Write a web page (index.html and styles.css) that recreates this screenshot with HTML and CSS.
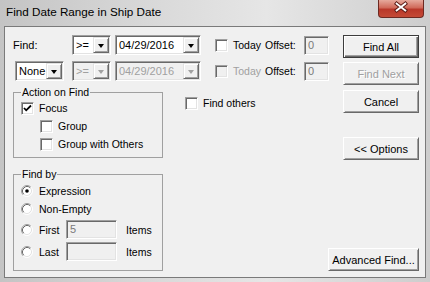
FILE: index.html
```html
<!DOCTYPE html>
<html lang="en">

<head>
    <meta charset="UTF-8">
    <title>Find Date Range in Ship Date</title>
    <link rel="stylesheet" href="styles.css">
</head>

<body>
    <div class="window">
        <div class="titlebar">
            <span class="title">Find Date Range in Ship Date</span>
            <span class="close">
                <svg width="46" height="18" viewBox="0 0 46 18">
                    <path d="M18.5 4.5 L27.5 11.5 M27.5 4.5 L18.5 11.5" stroke="#5a1a14" stroke-width="4" stroke-linecap="square" />
                    <path d="M18.5 4.5 L27.5 11.5 M27.5 4.5 L18.5 11.5" stroke="#fff" stroke-width="2" stroke-linecap="square" />
                </svg>
            </span>
        </div>

        <div class="client">
            <div class="main">
                <div class="row">
                    <span class="lbl-find">Find:</span>
                    <div class="combo op"><span class="val">&gt;=</span><span class="drop"></span></div>
                    <div class="combo date"><span class="val">04/29/2016</span><span class="drop"></span></div>
                    <label class="check today"><span class="box"></span>Today</label>
                    <span class="lbl-offset">Offset:</span>
                    <span class="edit offset">0</span>
                </div>
                <div class="row">
                    <div class="combo none"><span class="val">None</span><span class="drop"></span></div>
                    <div class="combo op disabled"><span class="val">&gt;=</span><span class="drop"></span></div>
                    <div class="combo date disabled"><span class="val">04/29/2016</span><span class="drop"></span></div>
                    <label class="check today disabled"><span class="box"></span>Today</label>
                    <span class="lbl-offset">Offset:</span>
                    <span class="edit offset">0</span>
                </div>

                <div class="lower">
                    <div class="groups">
                        <fieldset class="group action">
                            <legend>Action on Find</legend>
                            <label class="check item">
                                <span class="box">
                                    <svg width="9" height="9" viewBox="0 0 9 9"><path d="M1 4 L3.2 6.3 L8 1.5" stroke="#000" stroke-width="1.8" fill="none" /></svg>
                                </span>Focus
                            </label>
                            <label class="check item sub"><span class="box"></span>Group</label>
                            <label class="check item sub"><span class="box"></span>Group with Others</label>
                        </fieldset>

                        <fieldset class="group findby">
                            <legend>Find by</legend>
                            <div class="radio-row">
                                <svg class="radio" width="12" height="12" viewBox="0 0 12 12">
                                    <circle cx="6" cy="6" r="5" fill="#fff" />
                                    <path d="M2.11 9.89 A5.5 5.5 0 0 1 9.89 2.11" stroke="#a0a0a0" fill="none" />
                                    <path d="M9.89 2.11 A5.5 5.5 0 0 1 2.11 9.89" stroke="#fff" fill="none" />
                                    <path d="M2.82 9.18 A4.5 4.5 0 0 1 9.18 2.82" stroke="#696969" fill="none" />
                                    <path d="M9.18 2.82 A4.5 4.5 0 0 1 2.82 9.18" stroke="#e3e3e3" fill="none" />
                                    <circle cx="6" cy="6" r="1.8" fill="#000" />
                                </svg>
                                <span>Expression</span>
                            </div>
                            <div class="radio-row">
                                <svg class="radio" width="12" height="12" viewBox="0 0 12 12">
                                    <circle cx="6" cy="6" r="5" fill="#fff" />
                                    <path d="M2.11 9.89 A5.5 5.5 0 0 1 9.89 2.11" stroke="#a0a0a0" fill="none" />
                                    <path d="M9.89 2.11 A5.5 5.5 0 0 1 2.11 9.89" stroke="#fff" fill="none" />
                                    <path d="M2.82 9.18 A4.5 4.5 0 0 1 9.18 2.82" stroke="#696969" fill="none" />
                                    <path d="M9.18 2.82 A4.5 4.5 0 0 1 2.82 9.18" stroke="#e3e3e3" fill="none" />
                                </svg>
                                <span>Non-Empty</span>
                            </div>
                            <div class="radio-row count first">
                                <svg class="radio" width="12" height="12" viewBox="0 0 12 12">
                                    <circle cx="6" cy="6" r="5" fill="#fff" />
                                    <path d="M2.11 9.89 A5.5 5.5 0 0 1 9.89 2.11" stroke="#a0a0a0" fill="none" />
                                    <path d="M9.89 2.11 A5.5 5.5 0 0 1 2.11 9.89" stroke="#fff" fill="none" />
                                    <path d="M2.82 9.18 A4.5 4.5 0 0 1 9.18 2.82" stroke="#696969" fill="none" />
                                    <path d="M9.18 2.82 A4.5 4.5 0 0 1 2.82 9.18" stroke="#e3e3e3" fill="none" />
                                </svg>
                                <span class="rlabel">First</span>
                                <span class="edit items">5</span>
                                <span class="unit">Items</span>
                            </div>
                            <div class="radio-row count last">
                                <svg class="radio" width="12" height="12" viewBox="0 0 12 12">
                                    <circle cx="6" cy="6" r="5" fill="#fff" />
                                    <path d="M2.11 9.89 A5.5 5.5 0 0 1 9.89 2.11" stroke="#a0a0a0" fill="none" />
                                    <path d="M9.89 2.11 A5.5 5.5 0 0 1 2.11 9.89" stroke="#fff" fill="none" />
                                    <path d="M2.82 9.18 A4.5 4.5 0 0 1 9.18 2.82" stroke="#696969" fill="none" />
                                    <path d="M9.18 2.82 A4.5 4.5 0 0 1 2.82 9.18" stroke="#e3e3e3" fill="none" />
                                </svg>
                                <span class="rlabel">Last</span>
                                <span class="edit items"></span>
                                <span class="unit">Items</span>
                            </div>
                        </fieldset>
                    </div>

                    <label class="check others"><span class="box"></span>Find others</label>
                </div>
            </div>

            <div class="side">
                <button class="btn default">Find All</button>
                <button class="btn next" disabled>Find Next</button>
                <button class="btn cancel">Cancel</button>
                <button class="btn options">&lt;&lt; Options</button>
                <button class="btn advanced">Advanced Find...</button>
            </div>
        </div>
    </div>
</body>

</html>
```

FILE: styles.css
```css
body {
    margin: 0;
    font-family: "Liberation Sans", Arial, sans-serif;
    font-size: 10.5px;
    color: #000;
}

.window {
    width: 430px;
    height: 282px;
    box-sizing: border-box;
    padding: 0 4px 4px;
    display: flex;
    flex-direction: column;
    background: linear-gradient(90deg, #c4c4c4, #d6d6d6 30%, #e6e6e6 62%, #cdcdcd);
}

/* title bar */
.titlebar {
    height: 26px;
    flex: none;
    display: flex;
    justify-content: space-between;
    align-items: flex-start;
}

.title {
    font-size: 11.7px;
    padding: 5px 0 0 2px;
}

.close {
    width: 46px;
    height: 18px;
    margin-right: 2px;
    box-sizing: border-box;
    border: 1px solid #6d2a22;
    border-top: none;
    border-radius: 0 0 4px 4px;
    background: linear-gradient(#e6a99c, #d06a5a 45%, #b9382a 55%, #c44a36);
    display: flex;
    align-items: center;
    justify-content: center;
}

.close svg {
    margin-top: -1px;
}

/* client area */
.client {
    flex: 1;
    display: flex;
    border: 1px solid #7a7a7a;
    background: #f0f0f0;
    padding: 8px 6px 6px 8px;
}

.main {
    width: 315px;
    flex: none;
    display: flex;
    flex-direction: column;
}

.row {
    display: flex;
    align-items: center;
    height: 20px;
}

.row > * {
    flex: none;
}

.row + .row {
    margin-top: 6px;
}

.lbl-find {
    width: 59px;
    font-size: 11px;
}

.lbl-offset {
    width: 39px;
}

/* sunken 3d edges */
.combo,
.edit,
.box {
    box-sizing: border-box;
    border: 1px solid;
    border-color: #a0a0a0 #fff #fff #a0a0a0;
    box-shadow: inset 1px 1px #696969, inset -1px -1px #e3e3e3;
    background: #fff;
}

.combo {
    height: 20px;
    display: flex;
    font-size: 11px;
}

.combo .val {
    flex: 1;
    padding: 0 0 0 3px;
    line-height: 18px;
}

.combo .drop {
    width: 16px;
    margin: 1px;
    box-sizing: border-box;
    border: 1px solid;
    border-color: #e3e3e3 #696969 #696969 #e3e3e3;
    box-shadow: inset 1px 1px #fff, inset -1px -1px #a0a0a0;
    background: #f0f0f0;
    display: flex;
    align-items: center;
    justify-content: center;
}

.combo .drop::after {
    content: "";
    border-top: 4px solid #000;
    border-left: 3.5px solid transparent;
    border-right: 3.5px solid transparent;
    margin-top: 1px;
}

.combo.op {
    width: 39px;
    margin-right: 4px;
}

.combo.date {
    width: 86px;
    margin-right: 14px;
}

.combo.none {
    width: 49px;
    margin: 0 8px 0 2px;
}

.combo.disabled {
    background: #f0f0f0;
    color: #a0a0a0;
}

.combo.disabled .drop::after {
    border-top-color: #a0a0a0;
}

.edit {
    height: 19px;
    line-height: 17px;
    padding-left: 3px;
    background: #f0f0f0;
    color: #7a7a7a;
    font-size: 11px;
}

.edit.offset {
    width: 25px;
}

/* checkboxes */
.check {
    display: flex;
    align-items: center;
}

.box {
    width: 13px;
    height: 13px;
    flex: none;
    margin-right: 5px;
    display: flex;
    align-items: center;
    justify-content: center;
}

.check.today {
    width: 50px;
}

.check.disabled {
    color: #a0a0a0;
}

.check.disabled .box {
    background: #f0f0f0;
}

/* lower part */
.lower {
    display: flex;
    align-items: flex-start;
    margin-top: 5px;
}

.groups {
    width: 150px;
    flex: none;
    display: flex;
    flex-direction: column;
}

.group {
    margin: 0;
    min-width: 0;
    box-sizing: border-box;
    border: 1px solid #a0a0a0;
    padding: 0 0 4px 7px;
}

.group legend {
    padding: 0 1px;
    line-height: 13px;
}

.item {
    height: 18px;
}

.item.sub {
    margin-left: 19px;
}

.findby {
    margin-top: 10px;
    padding-top: 1px;
    padding-bottom: 9px;
}

.radio-row {
    display: flex;
    align-items: center;
    height: 18px;
}

.radio {
    flex: none;
    margin-right: 6px;
}

.radio-row.count {
    height: 19px;
    margin-top: 2px;
}

.radio-row.last {
    margin-top: 3px;
}

.rlabel {
    width: 27px;
}

.edit.items {
    width: 51px;
}

.unit {
    margin-left: 9px;
}

.others {
    height: 18px;
    margin: 8px 0 0 22px;
}

/* buttons */
.side {
    flex: 1;
    display: flex;
    flex-direction: column;
    align-items: flex-end;
}

.btn {
    width: 76px;
    height: 23px;
    margin: 0;
    padding: 0;
    font-family: inherit;
    font-size: 11px;
    color: #000;
    background: #f0f0f0;
    border: 1px solid;
    border-color: #fff #696969 #696969 #fff;
    box-shadow: inset 1px 1px #f0f0f0, inset -1px -1px #a0a0a0;
}

.btn.default {
    border-color: #3c3c3c;
    box-shadow: inset 1px 1px #fff, inset -1px -1px #696969, inset -2px -2px #a0a0a0;
}

.btn:disabled {
    color: #a0a0a0;
    text-shadow: 1px 1px #fff;
}

.btn.next {
    margin-top: 4px;
}

.btn.cancel {
    margin-top: 5px;
}

.btn.options {
    margin-top: 24px;
}

.btn.advanced {
    width: 91px;
    margin-top: auto;
}
```
